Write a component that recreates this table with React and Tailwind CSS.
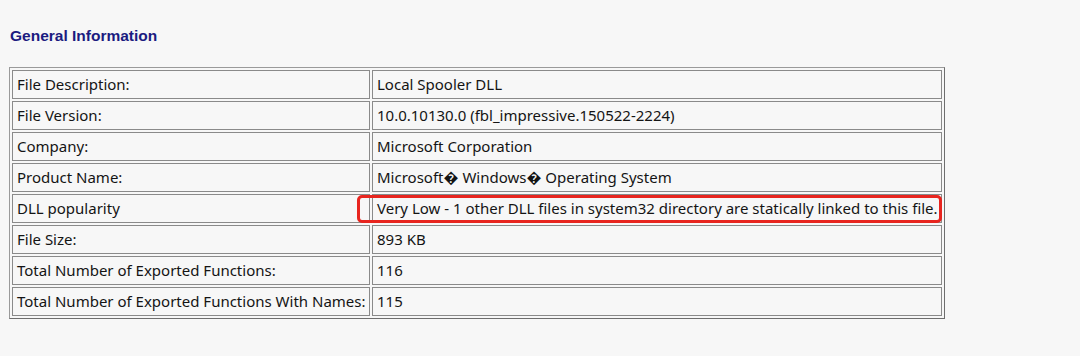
import React from "react";

const rows = [
  ["File Description:", "Local Spooler DLL"],
  ["File Version:", "10.0.10130.0 (fbl_impressive.150522-2224)"],
  ["Company:", "Microsoft Corporation"],
  ["Product Name:", "Microsoft\uFFFD Windows\uFFFD Operating System"],
  ["DLL popularity", "Very Low - 1 other DLL files in system32 directory are statically linked to this file.", true],
  ["File Size:", "893 KB"],
  ["Total Number of Exported Functions:", "116"],
  ["Total Number of Exported Functions With Names:", "115"],
];

export default function App() {
  return (
    <div className="w-[1080px] h-[356px] bg-[#f7f7f7] px-[9px] pt-[27px]" style={{ fontFamily: "'Noto Sans', sans-serif" }}>
      <h3 className="ml-px text-[15.5px] leading-[18px] font-bold text-[#1b1b80]" style={{ fontFamily: "'Liberation Sans', Arial, sans-serif" }}>
        General Information
      </h3>
      <table className="mt-[22px] w-[936px] table-fixed border-separate border-spacing-[2px] border border-t-[#9a9a9a] border-l-[#9a9a9a] border-b-[#6e6e6e] border-r-[#6e6e6e] text-[15px] text-[#141414]">
        <colgroup>
          <col className="w-[358px]" />
          <col />
        </colgroup>
        <tbody>
          {rows.map(([label, value, marked]) => (
            <tr key={label}>
              <td className="h-[29px] pl-[4px] pr-0 py-0 border border-[#8a8a8a] whitespace-nowrap">{label}</td>
              <td className="relative h-[29px] px-[4px] py-0 border border-[#8a8a8a] whitespace-nowrap">
                {value}
                {marked && (
                  <span className="absolute -left-[16px] -right-[1px] top-0 h-[28px] border-[3px] border-[#e8251f] rounded-[5px]" />
                )}
              </td>
            </tr>
          ))}
        </tbody>
      </table>
    </div>
  );
}
